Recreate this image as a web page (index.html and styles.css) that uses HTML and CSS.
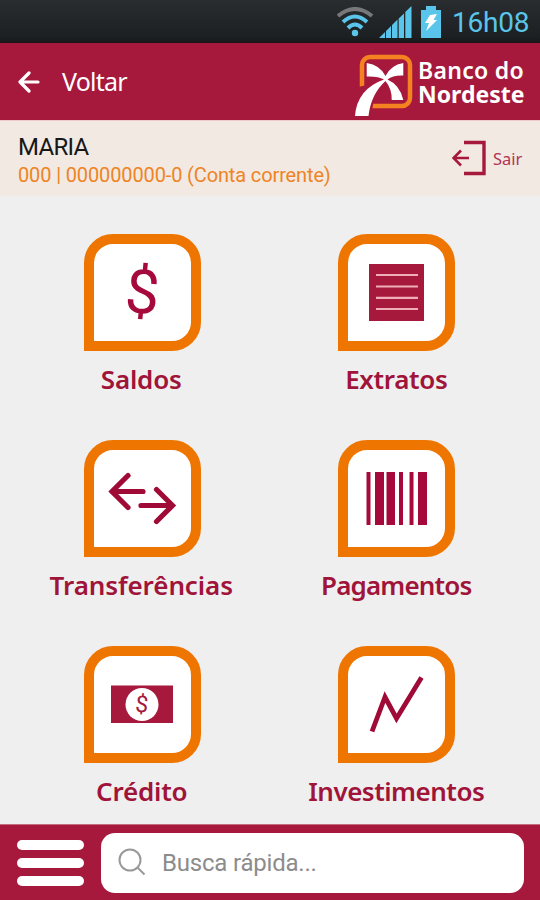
FILE: index.html
```html
<!DOCTYPE html>
<html lang="pt-BR">
<head>
<meta charset="utf-8">
<title>Banco do Nordeste</title>
<link rel="stylesheet" href="styles.css">
</head>
<body>
<div class="app">
  <div class="status">
    <svg class="wifi" width="38" height="30" viewBox="0 0 38 30" fill="none" stroke-width="4">
      <path d="M2 9Q19-5 36 9" stroke="#777879"/>
      <path d="M7 15Q19 4 31 15" stroke="#5ac5ea"/>
      <path d="M12 21Q19 14 26 21" stroke="#5ac5ea"/>
      <circle cx="19" cy="26" r="3.2" fill="#5ac5ea"/>
    </svg>
    <svg class="signal" width="34" height="33" viewBox="0 0 34 33" fill="#5ac5ea">
      <path d="M0 32L6 26V32ZM7 25L12 20V32H7ZM13 19L18.500 13.500V32H13ZM19.700 12.500L25 7.500V32H19.700ZM26.300 6L32.500 0V32H26.300Z"/>
    </svg>
    <svg class="battery" width="20" height="32" viewBox="0 0 20 32">
      <path d="M0 4H5V0H15V4H20V32H0Z" fill="#5ac5ea"/>
      <path d="M9 9L16 8L12.500 14H16L5 25L8 17H4Z" fill="#fff"/>
    </svg>
    <span class="clock">16h08</span>
  </div>
  <header class="header">
    <svg class="back" width="22" height="22" viewBox="0 0 22 22" fill="none" stroke="#fff" stroke-width="3.200" stroke-linecap="round" stroke-linejoin="round"><path d="M20 11H2M11 2L2 11L11 20"/></svg>
    <span class="voltar">Voltar</span>
    <svg class="logo" width="60" height="64" viewBox="0 0 60 64">
      <rect x="8" y="3" width="48" height="49" rx="8" fill="none" stroke="#f58220" stroke-width="4.500"/>
      <path d="M0 34L17 30L20 44L17 64H0Z" fill="#a6193c"/>
      <path d="M12.700 9Q26 11 31.500 22Q37 11 49.300 9V21.500Q39 21 33.500 25.500Q46 31 49.300 46H37.700Q38 35 31.500 27Q17 40 14.500 62H1Q3 35 30 25.500Q24 22 12.700 22.500Z" fill="#fff"/>
    </svg>
    <div class="brand"><span class="brand-top">Banco do</span><span class="brand-name">Nordeste</span></div>
  </header>
  <section class="account">
    <div class="holder"><span class="name">MARIA</span><span class="number">000 | 000000000-0 (Conta corrente)</span></div>
    <svg class="exit" width="34" height="36" viewBox="0 0 34 36" fill="none" stroke="#a6193c" stroke-width="3.400">
      <path d="M12 2.500H32V33.500H12"/>
      <path d="M17 18H2M9 10.500L1.500 18L9 25.500" stroke-width="2.500"/>
    </svg>
    <span class="sair">Sair</span>
  </section>
  <main class="grid">
    <div class="item">
      <div class="tile"><svg width="97" height="97" viewBox="0 0 97 97"><text class="dollar" x="48.500" y="69" text-anchor="middle" transform="rotate(5 48 48)">$</text></svg></div>
      <span class="label saldos">Saldos</span>
    </div>
    <div class="item">
      <div class="tile"><svg width="97" height="97" viewBox="0 0 97 97"><path d="M21 20H76V77H21Z" fill="#a6193c"/><path d="M28 31H70M28 42.500H70M28 53.800H70M28 65H70" stroke="#f0aeb9" stroke-width="2.200"/></svg></div>
      <span class="label extratos">Extratos</span>
    </div>
    <div class="item">
      <div class="tile"><svg width="97" height="97" viewBox="0 0 97 97" fill="none" stroke="#a00a37" stroke-width="5.200" stroke-linecap="round"><path d="M49 41.500H18M34 25.500L18 41.500L34 57.500M47 55.500H78M62.500 39.500L78.500 55.500L62.500 71.500"/></svg></div>
      <span class="label transferencias">Transferências</span>
    </div>
    <div class="item">
      <div class="tile"><svg width="97" height="97" viewBox="0 0 97 97" fill="#a6093c"><path d="M18.500 22H22.500V75H18.500ZM27 22H36V75H27ZM38.500 22H47V75H38.500ZM51 22H55V75H51ZM61.500 22H65.500V75H61.500ZM70 22H79V75H70Z"/></svg></div>
      <span class="label pagamentos">Pagamentos</span>
    </div>
    <div class="item">
      <div class="tile"><svg width="97" height="97" viewBox="0 0 97 97"><path d="M17 29.500H79V67H17Z" fill="#a6193c"/><circle cx="48" cy="48.500" r="16.500" fill="#fff"/><text class="coin" x="48" y="56" text-anchor="middle" transform="rotate(5 48 48)">$</text></svg></div>
      <span class="label credito">Crédito</span>
    </div>
    <div class="item">
      <div class="tile"><svg width="97" height="97" viewBox="0 0 97 97" fill="none" stroke="#a00a37" stroke-width="4.800"><path d="M24 75.500L37 41L48.500 62.500L73.500 21.500"/></svg></div>
      <span class="label investimentos">Investimentos</span>
    </div>
  </main>
  <footer class="footer">
    <div class="menu"><i></i><i></i><i></i></div>
    <div class="search">
      <svg width="28" height="28" viewBox="0 0 28 28" fill="none" stroke="#999" stroke-width="2"><circle cx="12" cy="12" r="10.500"/><path d="M19 19L26.500 26.500"/></svg>
      <span class="hint">Busca rápida...</span>
    </div>
  </footer>
</div>
</body>
</html>
```
FILE: styles.css
```css
* { box-sizing: border-box; }
body { margin: 0; }
.app {
  width: 540px;
  height: 900px;
  display: flex;
  flex-direction: column;
  background: #efefef;
  font-family: "Noto Sans", "Open Sans", sans-serif;
  overflow: hidden;
}
svg { display: block; flex: none; }
span { white-space: nowrap; }
.status {
  height: 43px;
  display: flex;
  align-items: flex-start;
  padding: 6px 0 0 336px;
  background: linear-gradient(#2a2d2f, #1c2022 85%, #171719);
}
.wifi { margin-top: 1px; }
.signal { margin-left: 5px; }
.battery { margin-left: 8px; }
.clock {
  margin-left: 11px;
  font: 28px/33px Roboto, sans-serif;
  letter-spacing: -0.2px;
  color: #5ac5ea;
}
.header {
  height: 77px;
  display: flex;
  align-items: flex-start;
  padding-left: 18px;
  background: #a6193c;
}
.back { margin-top: 28px; }
.voltar {
  margin: 21px 0 0 22px;
  width: 66px;
  font-size: 25px;
  line-height: 34px;
  letter-spacing: -0.8px;
  color: #fff;
}
.logo { margin: 11px 0 0 226px; }
.brand {
  display: flex;
  flex-direction: column;
  margin: 15px 0 0 4px;
  color: #fff;
  font-size: 23px;
  line-height: 24px;
}
.brand-top { font-weight: 600; letter-spacing: 0.3px; }
.brand-name { font-weight: 700; }
.account {
  height: 76px;
  display: flex;
  align-items: flex-start;
  padding-left: 18px;
  background: #f2e9e3;
  border-top: 1px solid #f2c9cb;
}
.holder {
  width: 434px;
  display: flex;
  flex-direction: column;
  padding-top: 12px;
  font-family: Roboto, sans-serif;
}
.name { font-size: 24px; line-height: 28px; letter-spacing: -0.7px; color: #171717; }
.number { font-size: 20px; line-height: 28px; letter-spacing: -0.13px; color: #ee8424; }
.exit { margin-top: 19px; }
.sair { margin: 25px 0 0 7px; font-size: 16.5px; line-height: 25px; color: #b23452; }
.grid {
  height: 628px;
  display: grid;
  grid-template-columns: 254.500px 254.500px;
  grid-auto-rows: 206px;
  padding: 38px 0 0 15px;
}
.item {
  display: flex;
  flex-direction: column;
  align-items: center;
}
.tile {
  width: 117px;
  height: 117px;
  flex: none;
  border: 10px solid #ee7600;
  border-radius: 29px 29px 29px 0;
  background: #fff;
}
.dollar { font: 400 61px Roboto, sans-serif; fill: #a6093c; }
.coin { font: 23px Roboto, sans-serif; fill: #a6193c; }
.label {
  margin-top: 9.500px;
  font-size: 26px;
  line-height: 36px;
  font-weight: 600;
  letter-spacing: -0.2px;
  color: #a0143a;
}
.saldos { margin-left: -2px; }
.extratos { letter-spacing: -0.35px; margin-left: -1px; }
.transferencias { letter-spacing: -0.1px; margin-left: -2px; }
.pagamentos { letter-spacing: -0.85px; margin-left: -1px; }
.credito { margin-left: -1px; }
.investimentos { letter-spacing: -0.5px; margin-left: -1px; }
.footer {
  height: 76px;
  display: flex;
  align-items: flex-start;
  padding: 8px 0 0 17px;
  background: #a6193c;
  border-top: 1px solid #c66b7f;
}
.menu {
  width: 67px;
  display: flex;
  flex-direction: column;
  gap: 8px;
  margin-top: 7px;
}
.menu i { height: 10px; border-radius: 5px; background: #fff; }
.search {
  width: 423px;
  height: 60px;
  margin-left: 17px;
  padding: 15px 0 0 17px;
  display: flex;
  background: #fff;
  border-radius: 14px;
}
.hint {
  margin-left: 16px;
  font: 24px/31px Roboto, sans-serif;
  letter-spacing: -0.2px;
  color: #8c8c8c;
}
```
